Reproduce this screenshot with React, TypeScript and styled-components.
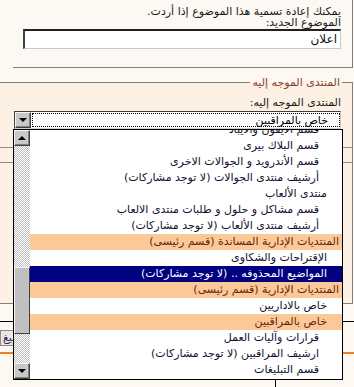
import React from 'react';
import styled, { createGlobalStyle, css } from 'styled-components';

const GlobalStyle = createGlobalStyle`
  html, body {
    margin: 0;
    padding: 0;
    background: #fdf8f2;
  }
  body {
    font-family: Tahoma, "DejaVu Sans", sans-serif;
    font-size: 11px;
    color: #000;
  }
`;

// Page
const Page = styled.div`
  position: relative;
  width: 354px;
  height: 387px;
  overflow: hidden;
  direction: rtl;
`;

// Rename fieldset (top is scrolled out of view)
const RenameBox = styled.div`
  width: 340px;
  height: 68px;
  margin-right: 1px;
  padding: 6px 11px 0 0;
  box-sizing: border-box;
  border-right: 1px solid #808080;
  border-bottom: 1px solid #808080;
  background: #fcf8f3;
`;

const Line = styled.div`
  height: 11px;
  line-height: 11px;
  white-space: nowrap;
  color: #1a1a1a;
`;

const TextInput = styled.div`
  width: 318px;
  height: 20px;
  margin-top: 1px;
  box-sizing: border-box;
  border-style: solid;
  border-width: 2px 1px 1px 2px;
  border-color: #202020 #c8c8c8 #c8c8c8 #404040;
  background: #fff;
  padding: 0 3px;
  font-size: 12px;
  line-height: 17px;
  color: #111;
`;

// Target forum fieldset
const ForumBox = styled.div`
  position: relative;
  width: 362px;
  height: 222px;
  margin: 14px 1px 0 0;
  box-sizing: border-box;
  border: 1px solid #808080;
  border-left: none;
  background: #fdf1e6;
  padding: 0 11px 0 0;
`;

const Legend = styled.div`
  position: absolute;
  top: -7px;
  right: 10px;
  padding: 0 2px;
  background: linear-gradient(#fdf8f2 50%, #fdf1e6 50%);
  color: #8a3f2c;
  line-height: 13px;
`;

const FieldLabel = styled.div`
  margin-top: 14px;
  line-height: 12px;
  color: #1a1a1a;
`;

const Select = styled.div`
  display: flex;
  width: 327px;
  height: 18px;
  margin-top: 2px;
  box-sizing: border-box;
  border-style: solid;
  border-width: 1px;
  border-color: #404040 #d4d0c8 #d4d0c8 #404040;
  background: #fff;
`;

const SelectValue = styled.div`
  flex: 1;
  margin: 1px 0 1px 1px;
  border: 1px dotted #000;
  padding-right: 11px;
  line-height: 13px;
  white-space: nowrap;
`;

const ScrollButton = styled.div`
  width: 16px;
  height: 16px;
  box-sizing: border-box;
  display: flex;
  align-items: center;
  justify-content: center;
  background: #c8c8c8;
  border-style: solid;
  border-width: 1px;
  border-color: #f4f4f4 #404040 #404040 #f4f4f4;
  box-shadow: inset -1px -1px 0 #808080;
`;

const Arrow = styled.div<{ $up?: boolean }>`
  width: 0;
  height: 0;
  border-left: 4px solid transparent;
  border-right: 4px solid transparent;
  ${(p) =>
    p.$up
      ? css`border-bottom: 4px solid #000;`
      : css`border-top: 4px solid #000;`}
`;

const HiddenBand = styled.div`
  height: 14px;
  margin: 18px -11px 0 0;
  border-top: 1px solid #8c8c8c;
  border-bottom: 1px solid #8c8c8c;
`;

// Lower part
const DarkRule = styled.div`
  width: 354px;
  height: 1px;
  margin-top: 17px;
  background: #000;
`;

const ButtonRow = styled.div`
  display: flex;
  direction: ltr;
  height: 30px;
  padding-top: 8px;
  box-sizing: border-box;
`;

const PushButton = styled.div`
  height: 16px;
  padding: 0 2px;
  line-height: 14px;
  box-sizing: border-box;
  border: 1px solid #8c8c8c;
  background: #ece6df;
  color: #1d2a6a;
  direction: rtl;
`;

const OrangeRule = styled.div`
  width: 354px;
  height: 2px;
  background: #e8822a;
`;

const Footer = styled.div`
  display: flex;
  direction: ltr;
  height: 40px;
  background: #fdf8f2;
`;

const FooterCell = styled.div`
  width: 275px;
  border-right: 1px solid #000;
  height: 100%;
`;

// Dropdown list (overlay)
const DropList = styled.div`
  position: absolute;
  left: 13px;
  top: 129px;
  width: 330px;
  height: 251px;
  box-sizing: border-box;
  border: 1px solid #000;
  background: #fff;
  display: flex;
  direction: ltr;
  overflow: hidden;
`;

const ScrollBar = styled.div`
  width: 16px;
  display: flex;
  flex-direction: column;
  background-color: #fff;
  background-image: repeating-conic-gradient(#c0c0c0 0 25%, #fff 0 50%);
  background-size: 2px 2px;
`;

const Track = styled.div`
  flex: 1;
  padding-top: 121px;
`;

const Thumb = styled.div`
  height: 67px;
  box-sizing: border-box;
  background: #c0c0c0;
  border-style: solid;
  border-width: 1px;
  border-color: #f4f4f4 #404040 #404040 #f4f4f4;
`;

const Options = styled.div`
  flex: 1;
  direction: rtl;
  margin-top: -8px;
`;

const Option = styled.div<{ $kind: string; $level: number }>`
  height: 16px;
  line-height: 16px;
  white-space: nowrap;
  padding-right: ${(p) => [3, 15, 23][p.$level]}px;
  color: #101030;
  ${(p) =>
    p.$kind === 'cat' &&
    css`
      background: #fbc998;
      color: #6b1d0e;
    `}
  ${(p) =>
    p.$kind === 'active' &&
    css`
      background: #000080;
      color: #fff;
    `}
`;

const forums = [
  { title: 'قسم الايفون والايباد', level: 2, kind: '' },
  { title: 'قسم البلاك بيرى', level: 2, kind: '' },
  { title: 'قسم الأندرويد و الجوالات الاخرى', level: 2, kind: '' },
  { title: 'أرشيف منتدى الجوالات (لا توجد مشاركات)', level: 2, kind: '' },
  { title: 'منتدى الألعاب', level: 1, kind: '' },
  { title: 'قسم مشاكل و حلول و طلبات منتدى الالعاب', level: 2, kind: '' },
  { title: 'أرشيف منتدى الألعاب (لا توجد مشاركات)', level: 2, kind: '' },
  { title: 'المنتديات الإدارية المساندة (قسم رئيسى)', level: 0, kind: 'cat' },
  { title: 'الإقتراحات والشكاوى', level: 1, kind: '' },
  { title: 'المواضيع المحذوفه .. (لا توجد مشاركات)', level: 1, kind: 'active' },
  { title: 'المنتديات الإدارية (قسم رئيسى)', level: 0, kind: 'cat' },
  { title: 'خاص بالاداريين', level: 1, kind: '' },
  { title: 'خاص بالمراقبين', level: 1, kind: 'cat' },
  { title: 'قرارات وآليات العمل', level: 2, kind: '' },
  { title: 'ارشيف المراقبين (لا توجد مشاركات)', level: 2, kind: '' },
  { title: 'قسم التبليغات', level: 2, kind: '' },
];

export default function App() {
  return (
    <>
      <GlobalStyle />
      <Page>
        <RenameBox>
          <Line>يمكنك إعادة تسمية هذا الموضوع إذا أردت.</Line>
          <Line>الموضوع الجديد:</Line>
          <TextInput>اعلان</TextInput>
        </RenameBox>

        <ForumBox>
          <Legend>المنتدى الموجه إليه</Legend>
          <FieldLabel>المنتدى الموجه إليه:</FieldLabel>
          <Select>
            <SelectValue>خاص بالمراقبين</SelectValue>
            <ScrollButton>
              <Arrow />
            </ScrollButton>
          </Select>
          <HiddenBand />
        </ForumBox>

        <DarkRule />
        <ButtonRow>
          <PushButton>تبليغ</PushButton>
        </ButtonRow>
        <OrangeRule />
        <Footer>
          <FooterCell />
        </Footer>

        <DropList>
          <ScrollBar>
            <ScrollButton>
              <Arrow $up />
            </ScrollButton>
            <Track>
              <Thumb />
            </Track>
            <ScrollButton>
              <Arrow />
            </ScrollButton>
          </ScrollBar>
          <Options>
            {forums.map((f) => (
              <Option key={f.title} $kind={f.kind} $level={f.level}>
                {f.title}
              </Option>
            ))}
          </Options>
        </DropList>
      </Page>
    </>
  );
}
